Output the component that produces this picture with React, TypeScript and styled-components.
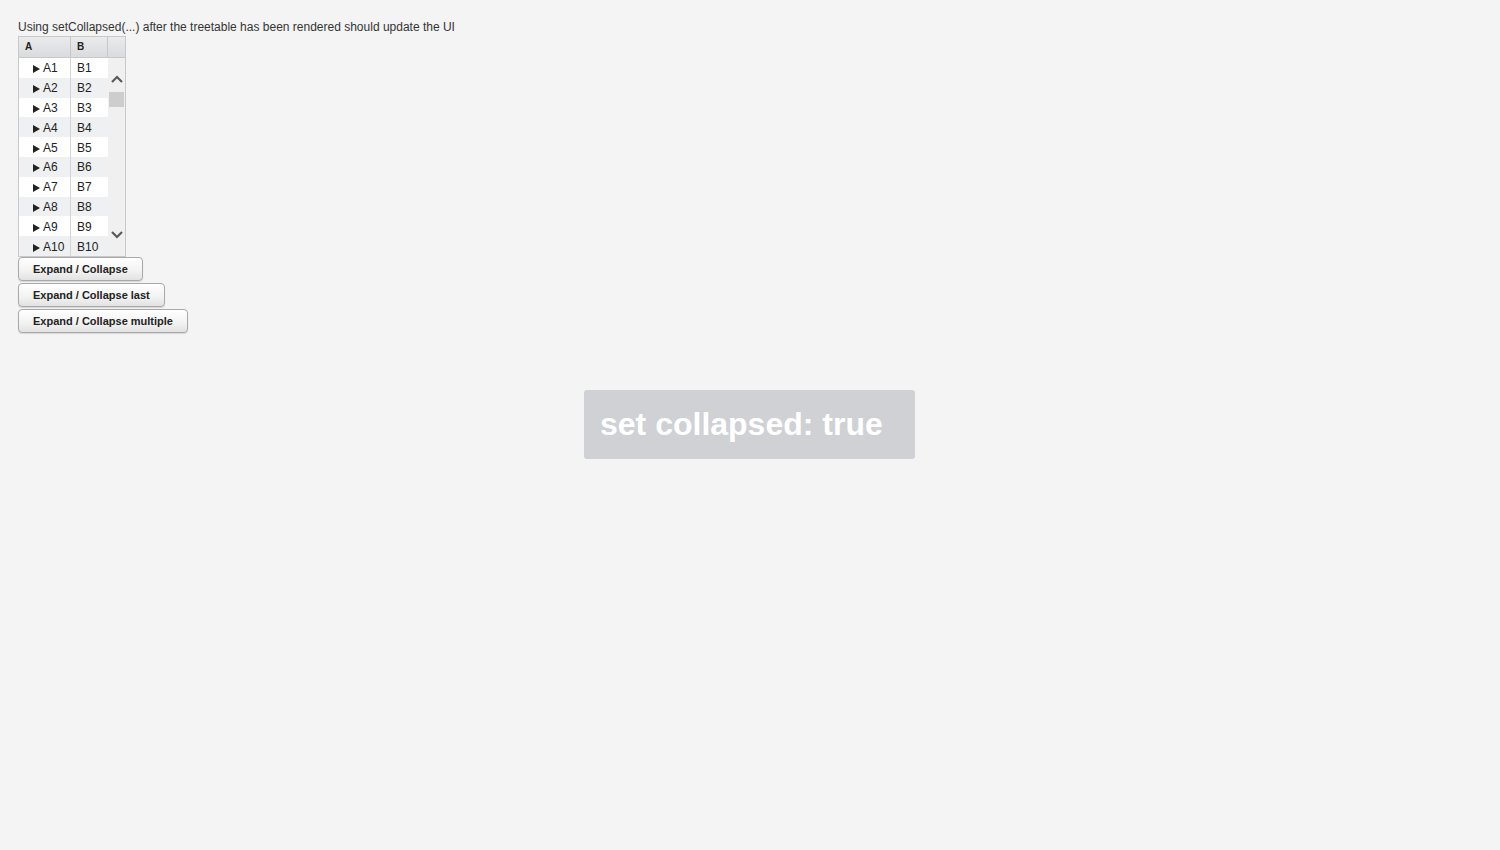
import styled, { createGlobalStyle } from "styled-components";

const GlobalStyle = createGlobalStyle`
  html, body {
    margin: 0;
    background: #f4f4f4;
    font-family: "Liberation Sans", Arial, sans-serif;
  }
`;

const Page = styled.div`
  padding: 19px 18px 18px;
  color: #333;
`;

const Caption = styled.div`
  font-size: 12px;
  line-height: 16px;
  margin-bottom: 1px;
`;

const Table = styled.div`
  width: 106px;
  border: 1px solid #c8c8c8;
  background: #f0f0f0;
`;

const HeadRow = styled.div`
  display: grid;
  grid-template-columns: 52px 37px 17px;
  height: 20px;
  border-bottom: 1px solid #c8c8c8;
  background: linear-gradient(#eaebec, #d9dbdd);
`;

const HeadCell = styled.div<{ last?: boolean }>`
  font-size: 10px;
  font-weight: bold;
  color: #222;
  line-height: 20px;
  padding-left: 6px;
  border-right: ${(p) => (p.last ? "none" : "1px solid #c8c8c8")};
`;

const Body = styled.div`
  display: grid;
  grid-template-columns: 89px 17px;
`;

const Rows = styled.div`
  display: flex;
  flex-direction: column;
`;

const Row = styled.div<{ alt: boolean }>`
  display: grid;
  grid-template-columns: 52px 37px;
  height: 19.8px;
  background: ${(p) => (p.alt ? "#eef0f2" : "#ffffff")};
`;

const Cell = styled.div<{ indent?: boolean }>`
  box-sizing: border-box;
  height: 19.8px;
  font-size: 12px;
  color: #222;
  line-height: 16px;
  padding: 1px 0 0 ${(p) => (p.indent ? "14px" : "6px")};
  border-right: ${(p) => (p.indent ? "1px solid #d4d4d4" : "none")};
  display: flex;
  align-items: center;
  white-space: nowrap;
`;

const Arrow = styled.span`
  width: 0;
  height: 0;
  border-top: 4px solid transparent;
  border-bottom: 4px solid transparent;
  border-left: 7px solid #222;
  margin: 2px 3px 0 0;
`;

const Scrollbar = styled.div`
  display: flex;
  flex-direction: column;
  align-items: center;
  background: #f0f0f0;
  padding-top: 17px;
`;

const Thumb = styled.div`
  width: 15px;
  height: 15px;
  background: #cdcdcd;
  margin-top: 9px;
`;

const Track = styled.div`
  flex: 1;
`;

const ButtonStack = styled.div`
  display: flex;
  flex-direction: column;
  align-items: flex-start;
  gap: 2px;
`;

const Button = styled.button`
  font-family: "Liberation Sans", Arial, sans-serif;
  font-size: 11px;
  font-weight: bold;
  color: #222;
  height: 24px;
  padding: 0 14px;
  border: 1px solid #a9a9a9;
  border-radius: 4px;
  background: linear-gradient(#ffffff, #f2f2f2 60%, #e2e2e2);
  box-shadow: 0 1px 1px rgba(0, 0, 0, 0.12);
`;

const Toast = styled.div`
  position: fixed;
  left: 584px;
  top: 390px;
  box-sizing: border-box;
  width: 331px;
  height: 69px;
  padding: 0 16px;
  border-radius: 3px;
  background: #cfd1d5;
  color: #ffffff;
  font-size: 32px;
  font-weight: bold;
  line-height: 69px;
`;

const Chevron = ({ up }: { up?: boolean }) => (
  <svg width="12" height="8" viewBox="0 0 12 8">
    <path
      d={up ? "M1 7 L6 2 L11 7" : "M1 1 L6 6 L11 1"}
      fill="none"
      stroke="#5a5a5a"
      strokeWidth="2.2"
    />
  </svg>
);

const rows = Array.from({ length: 10 }, (_, i) => i + 1);

export default function App() {
  return (
    <>
      <GlobalStyle />
      <Page>
        <Caption>
          Using setCollapsed(...) after the treetable has been rendered should
          update the UI
        </Caption>
        <Table>
          <HeadRow>
            <HeadCell>A</HeadCell>
            <HeadCell>B</HeadCell>
            <HeadCell last />
          </HeadRow>
          <Body>
            <Rows>
              {rows.map((n) => (
                <Row key={n} alt={n % 2 === 0}>
                  <Cell indent>
                    <Arrow />A{n}
                  </Cell>
                  <Cell>B{n}</Cell>
                </Row>
              ))}
            </Rows>
            <Scrollbar>
              <Chevron up />
              <Thumb />
              <Track />
              <Chevron />
              <div style={{ height: 17 }} />
            </Scrollbar>
          </Body>
        </Table>
        <ButtonStack>
          <Button>Expand / Collapse</Button>
          <Button>Expand / Collapse last</Button>
          <Button>Expand / Collapse multiple</Button>
        </ButtonStack>
      </Page>
      <Toast>set collapsed: true</Toast>
    </>
  );
}
